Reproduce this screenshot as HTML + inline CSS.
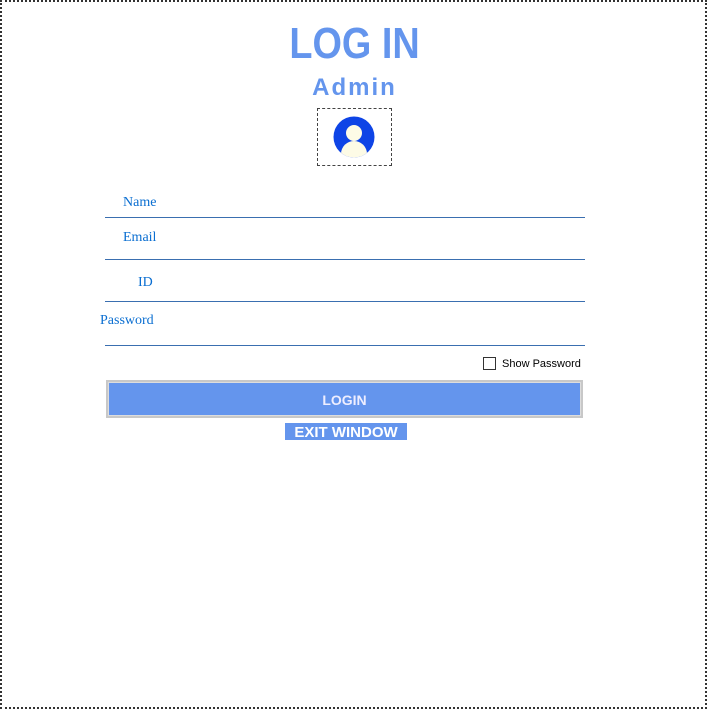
<!DOCTYPE html>
<html><head><style>
body{margin:0;width:709px;height:699px;background:#fff;position:relative;overflow:hidden;font-family:"Liberation Sans",sans-serif}
.frame{position:absolute;left:0;top:0;width:703px;height:705px;border:2px dotted #333}
.t{position:absolute;color:#6495ed;font-weight:900;text-align:center;width:709px;left:0}
.lbl{position:absolute;font-family:"Liberation Serif",serif;font-size:14px;color:#0a6ed1}
.ln{position:absolute;left:105px;width:480px;height:1px;background:#3a6fb0}
</style></head><body>
<div class="frame"></div>
<div class="t" style="top:20px;font-size:44px;line-height:48px;transform:scaleX(0.86)">LOG IN</div>
<div class="t" style="top:74px;font-size:24px;letter-spacing:2px">Admin</div>
<div style="position:absolute;left:317px;top:108px;width:73px;height:56px;border:1px dashed #444"></div>
<svg style="position:absolute;left:333px;top:116px" width="42" height="42" viewBox="0 0 42 42">
<circle cx="21" cy="21" r="20.5" fill="#0e44e6"/>
<clipPath id="c"><circle cx="21" cy="21" r="20.5"/></clipPath>
<circle cx="21" cy="17" r="8" fill="#fdfbe6"/>
<ellipse cx="21" cy="38" rx="13" ry="13" fill="#fdfbe6" clip-path="url(#c)"/>
</svg>
<div class="lbl" style="left:123px;top:195px">Name</div>
<div class="ln" style="top:217px"></div>
<div class="lbl" style="left:123px;top:230px">Email</div>
<div class="ln" style="top:259px"></div>
<div class="lbl" style="left:138px;top:275px">ID</div>
<div class="ln" style="top:301px"></div>
<div class="lbl" style="left:100px;top:313px">Password</div>
<div class="ln" style="top:345px"></div>
<div style="position:absolute;left:483px;top:357px;width:11px;height:11px;border:1px solid #333"></div>
<div style="position:absolute;left:502px;top:358px;font-size:11px;color:#000">Show Password</div>
<div style="position:absolute;left:106px;top:380px;width:473px;height:34px;border:2px solid #c8c8c8;background:#6495ed;box-shadow:inset 0 0 0 1px #ddd;color:#eef;font-weight:bold;font-size:14px;text-align:center;line-height:36px">LOGIN</div>
<div style="position:absolute;left:285px;top:423px;width:122px;height:17px;background:#6495ed;color:#fff;font-weight:bold;font-size:15px;text-align:center;line-height:19px">EXIT WINDOW</div>
</body></html>
